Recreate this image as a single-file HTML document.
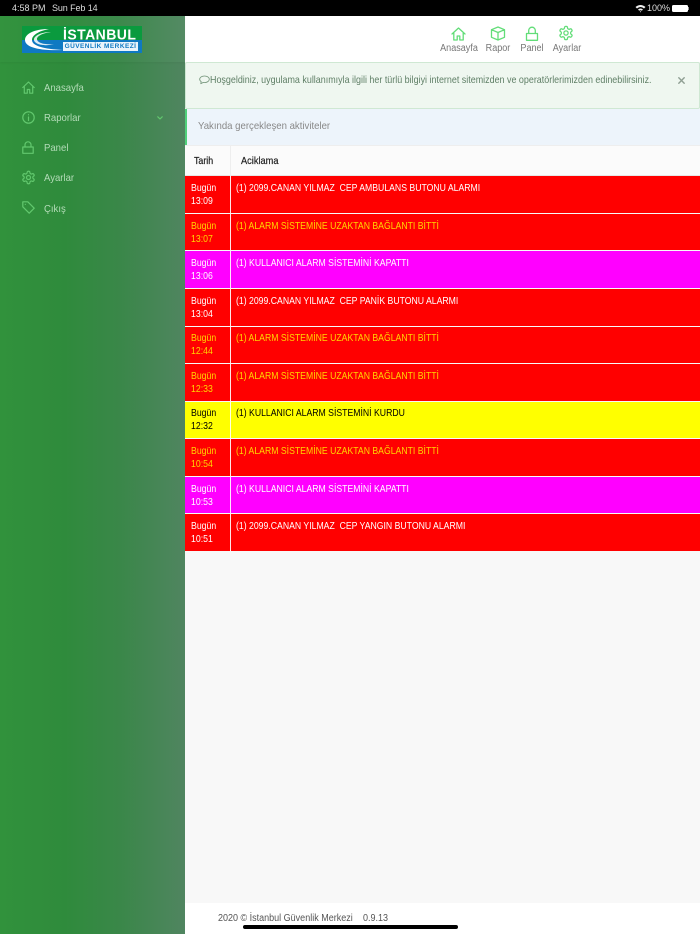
<!DOCTYPE html>
<html lang="tr"><head><meta charset="utf-8"><title>İstanbul Güvenlik Merkezi</title>
<style>
*{box-sizing:border-box}
html,body{margin:0;padding:0}
body{width:700px;height:934px;position:relative;overflow:hidden;background:#f8f8f8;font-family:"Liberation Sans",sans-serif;font-size:10px;color:#333}
.a{position:absolute;white-space:nowrap;transform-origin:left top}
.side{position:absolute;left:0;top:16px;width:185px;height:918px;background:linear-gradient(90deg,#31923c 0%,#2f8b3c 35%,#3a8749 65%,#508560 100%)}
.sidehead{position:absolute;left:0;top:16px;width:185px;height:46px;background:linear-gradient(90deg,#33933e 0%,#318d3e 35%,#3d894c 65%,#548a64 100%);box-shadow:0 1px 2px rgba(0,0,0,.05)}
.mi{position:absolute;left:44px;color:#b4dcb8;font-size:10.5px;line-height:12px;transform:scaleX(.91);transform-origin:left top;white-space:nowrap}
svg{position:absolute;fill:none;stroke-linecap:round;stroke-linejoin:round}
.si{stroke:#62c86e;stroke-width:1.2}
.ti{stroke:#62dd78;stroke-width:1.3}
.tl{position:absolute;top:43px;color:#777;font-size:10px;line-height:12px;text-align:center;width:60px;transform:scaleX(.905);transform-origin:center top}
.row{position:absolute;left:185px;width:515px}
.d{position:absolute;left:6px;top:6px;font-size:10.5px;line-height:13px;white-space:nowrap;transform:scaleX(.83);transform-origin:left top}
.t{position:absolute;left:51px;top:6px;font-size:10.5px;line-height:13px;white-space:pre;transform:scaleX(.827);transform-origin:left top}
.sep{position:absolute;left:45px;top:0;width:1px;height:100%;background:rgba(255,255,255,.9)}
.r{background:#f00;color:#fff}.o{background:#f00;color:#ffd500}.m{background:#f0f;color:#fff}.y{background:#ff0;color:#000}
</style></head><body>

<div class="a" style="left:0;top:0;width:700px;height:16px;background:#000"></div>
<div class="a" style="left:12px;top:3px;color:#ddd;font-size:9px;line-height:11px">4:58 PM</div>
<div class="a" style="left:52px;top:3px;color:#ddd;font-size:9px;line-height:11px;letter-spacing:-.1px">Sun Feb 14</div>
<svg style="left:635px;top:4px" width="11" height="9" viewBox="0 0 11 9"><path d="M.5 3Q5.500-1 10.500 3L9 4.500Q5.500 1.500 2 4.500ZM3 5.500Q5.500 3.500 8 5.500L6.800 6.800Q5.500 5.800 4.200 6.800ZM5.500 8.500 4.800 7.500Q5.500 7 6.200 7.500Z" fill="#eee"/></svg>
<div class="a" style="left:647px;top:3px;color:#ddd;font-size:9px;line-height:11px">100%</div>
<div class="a" style="left:672px;top:5px;width:16px;height:7px;background:#fff;border-radius:1.500px"></div>
<div class="a" style="left:688px;top:7px;width:1px;height:3px;background:#999"></div>

<div class="a" style="left:185px;top:16px;width:515px;height:46px;background:#fff"></div>
<div class="a" style="left:185px;top:62px;width:515px;height:47px;background:#eff7f0;border:1px solid #cfe8d3;border-radius:2px"></div>
<svg style="left:199px;top:75px" width="11" height="10" viewBox="0 0 11 10"><path d="M5.500 1C2.800 1 .7 2.500.7 4.300c0 1 .6 1.800 1.500 2.400L1.800 8.700l2.300-1.200c.4.100.9.100 1.400.1 2.700 0 4.800-1.500 4.800-3.300S8.200 1 5.500 1z" stroke="#6d8f74" stroke-width=".8"/></svg>
<div class="a" style="left:210px;top:73.500px;color:#5f7f66;font-size:10.500px;line-height:12px;transform:scaleX(.851)">Hoşgeldiniz, uygulama kullanımıyla ilgili her türlü bilgiyi internet sitemizden ve operatörlerimizden edinebilirsiniz.</div>
<svg style="left:678px;top:77px" width="7" height="7" viewBox="0 0 7 7"><path d="M.8.800l5.400 5.400M6.200.800.800 6.200" stroke="#8f9f93" stroke-width="1.400"/></svg>

<div class="a" style="left:185px;top:109px;width:515px;height:36px;background:#edf4fb;border-left:2px solid #4fd07a"></div>
<div class="a" style="left:198px;top:120px;color:#888;font-size:10.500px;line-height:13px;transform:scaleX(.914)">Yakında gerçekleşen aktiviteler</div>

<div class="a" style="left:185px;top:145px;width:515px;height:31px;background:#fbfbfb;border-top:1px solid #eee;border-bottom:1px solid #e6e6e6"></div>
<div class="a" style="left:230px;top:145px;width:1px;height:31px;background:#eee"></div>
<div class="a" style="left:194px;top:155px;color:#222;font-size:10.500px;line-height:12px;transform:scaleX(.84);-webkit-text-stroke:.2px #222">Tarih</div>
<div class="a" style="left:241px;top:155px;color:#222;font-size:10.500px;line-height:12px;transform:scaleX(.88);-webkit-text-stroke:.2px #222">Aciklama</div>

<div class="row r" style="top:176px;height:37px"><div class="d">Bugün<br>13:09</div><div class="sep"></div><div class="t">(1) 2099.CANAN YILMAZ  CEP AMBULANS BUTONU ALARMI</div></div>
<div class="row o" style="top:214px;height:36px"><div class="d">Bugün<br>13:07</div><div class="sep"></div><div class="t">(1) ALARM SİSTEMİNE UZAKTAN BAĞLANTI BİTTİ</div></div>
<div class="row m" style="top:251px;height:37px"><div class="d">Bugün<br>13:06</div><div class="sep"></div><div class="t">(1) KULLANICI ALARM SİSTEMİNİ KAPATTI</div></div>
<div class="row r" style="top:289px;height:37px"><div class="d">Bugün<br>13:04</div><div class="sep"></div><div class="t">(1) 2099.CANAN YILMAZ  CEP PANİK BUTONU ALARMI</div></div>
<div class="row o" style="top:327px;height:36px"><div class="d" style="top:5px">Bugün<br>12:44</div><div class="sep"></div><div class="t" style="top:5px">(1) ALARM SİSTEMİNE UZAKTAN BAĞLANTI BİTTİ</div></div>
<div class="row o" style="top:364px;height:37px"><div class="d">Bugün<br>12:33</div><div class="sep"></div><div class="t">(1) ALARM SİSTEMİNE UZAKTAN BAĞLANTI BİTTİ</div></div>
<div class="row y" style="top:402px;height:36px"><div class="d" style="top:5px">Bugün<br>12:32</div><div class="sep"></div><div class="t" style="top:5px">(1) KULLANICI ALARM SİSTEMİNİ KURDU</div></div>
<div class="row o" style="top:439px;height:37px"><div class="d">Bugün<br>10:54</div><div class="sep"></div><div class="t">(1) ALARM SİSTEMİNE UZAKTAN BAĞLANTI BİTTİ</div></div>
<div class="row m" style="top:477px;height:36px"><div class="d">Bugün<br>10:53</div><div class="sep"></div><div class="t">(1) KULLANICI ALARM SİSTEMİNİ KAPATTI</div></div>
<div class="row r" style="top:514px;height:37px"><div class="d">Bugün<br>10:51</div><div class="sep"></div><div class="t">(1) 2099.CANAN YILMAZ  CEP YANGIN BUTONU ALARMI</div></div>

<svg style="left:451px;top:27px" width="15" height="14" viewBox="0 0 15 14"><path class="ti" d="M1 7 7.500 1 14 7M2.800 6v7h3.400V9h2.600v4h3.400V6"/></svg>
<svg style="left:490px;top:26px" width="16" height="15" viewBox="0 0 16 15"><path class="ti" d="M8 1l6.500 2.700v7.600L8 14l-6.500-2.700V3.700zM1.500 3.700 8 6.500l6.500-2.800M8 6.500V14"/></svg>
<svg style="left:525px;top:26px" width="14" height="15" viewBox="0 0 14 15"><path class="ti" d="M1.500 7.500h11v6.800h-11zM3.700 7.500V4.500a3.300 3.300 0 0 1 6.600 0v3"/></svg>
<svg style="left:558px;top:25px" width="16" height="16" viewBox="0 0 24 24"><g class="ti" style="stroke-width:1.900"><circle cx="12" cy="12" r="3.200"/><path d="M12.220 2h-.44a2 2 0 0 0-2 2v.18a2 2 0 0 1-1 1.730l-.43.250a2 2 0 0 1-2 0l-.15-.08a2 2 0 0 0-2.730.730l-.22.380a2 2 0 0 0 .73 2.730l.15.100a2 2 0 0 1 1 1.720v.510a2 2 0 0 1-1 1.740l-.15.090a2 2 0 0 0-.73 2.730l.22.380a2 2 0 0 0 2.730.730l.15-.08a2 2 0 0 1 2 0l.43.250a2 2 0 0 1 1 1.730V20a2 2 0 0 0 2 2h.44a2 2 0 0 0 2-2v-.18a2 2 0 0 1 1-1.730l.43-.250a2 2 0 0 1 2 0l.15.08a2 2 0 0 0 2.730-.73l.22-.390a2 2 0 0 0-.73-2.730l-.15-.08a2 2 0 0 1-1-1.740v-.5a2 2 0 0 1 1-1.740l.15-.090a2 2 0 0 0 .73-2.730l-.22-.380a2 2 0 0 0-2.730-.73l-.15.08a2 2 0 0 1-2 0l-.43-.25a2 2 0 0 1-1-1.730V4a2 2 0 0 0-2-2z"/></g></svg>
<div class="tl" style="left:429px">Anasayfa</div>
<div class="tl" style="left:468px">Rapor</div>
<div class="tl" style="left:502px">Panel</div>
<div class="tl" style="left:537px">Ayarlar</div>

<div class="a" style="left:185px;top:903px;width:515px;height:31px;background:#fff"></div>
<div class="a" style="left:218px;top:912.500px;color:#555;font-size:10px;line-height:12px;transform:scaleX(.9)">2020 © İstanbul Güvenlik Merkezi</div>
<div class="a" style="left:363px;top:912.500px;color:#555;font-size:10px;line-height:12px;transform:scaleX(.9)">0.9.13</div>
<div class="a" style="left:243px;top:925px;width:215px;height:4px;background:#000;border-radius:2px"></div>

<div class="side"></div>
<div class="sidehead"></div>

<div class="a" style="left:22px;top:26px;width:120px;height:27px;background:#0a9a3e"></div>
<div class="a" style="left:22px;top:40px;width:120px;height:13px;background:#0f79c2"></div>
<svg style="left:22px;top:26px" width="44" height="27" viewBox="0 0 44 27"><path d="M27 3C12 3 3 8 3 14c0 7 13 11 38 10C22 23 10 20 10 14 10 9 17 5 27 3z" fill="#fff"/><path d="M29 6C21 7 15 10 15 13c0 4 8 6 17 5-10 3-21 0-20-5C13 9 20 6 29 6z" fill="#fff" opacity=".85"/></svg>
<div class="a" style="left:63px;top:26.500px;color:#fff;font-weight:bold;font-size:14px;line-height:14px;letter-spacing:.45px;transform:scaleY(1.05)">İSTANBUL</div>
<div class="a" style="left:63px;top:41.500px;width:75px;height:9px;background:#eaf4fb;color:#0f79c2;font-weight:bold;font-size:6.500px;line-height:9px;text-align:center;letter-spacing:.45px">GÜVENLİK MERKEZİ</div>

<svg style="left:22px;top:81px" width="13" height="13" viewBox="0 0 13 13"><path class="si" d="M.8 6.500 6.500 1l5.700 5.500M2.300 5.500v6.700h3V8.500h2.400v3.700h3V5.500"/></svg>
<svg style="left:22px;top:111px" width="13" height="13" viewBox="0 0 13 13"><circle class="si" cx="6.500" cy="6.500" r="5.700"/><path class="si" d="M6.500 6v3.500M6.500 3.700v.1"/></svg>
<svg style="left:22px;top:141px" width="12" height="13" viewBox="0 0 12 13"><path class="si" d="M.8 6h10.400v6.300H.8zM3 6V3.800a3 3 0 0 1 6 0V6"/></svg>
<svg style="left:21px;top:170px" width="15" height="15" viewBox="0 0 24 24"><g class="si" style="stroke-width:1.900"><circle cx="12" cy="12" r="3.200"/><path d="M12.220 2h-.44a2 2 0 0 0-2 2v.18a2 2 0 0 1-1 1.730l-.43.250a2 2 0 0 1-2 0l-.15-.08a2 2 0 0 0-2.730.730l-.22.380a2 2 0 0 0 .73 2.730l.15.100a2 2 0 0 1 1 1.720v.510a2 2 0 0 1-1 1.740l-.15.090a2 2 0 0 0-.73 2.730l.22.380a2 2 0 0 0 2.730.730l.15-.08a2 2 0 0 1 2 0l.43.250a2 2 0 0 1 1 1.730V20a2 2 0 0 0 2 2h.44a2 2 0 0 0 2-2v-.18a2 2 0 0 1 1-1.730l.43-.250a2 2 0 0 1 2 0l.15.08a2 2 0 0 0 2.730-.73l.22-.390a2 2 0 0 0-.73-2.730l-.15-.08a2 2 0 0 1-1-1.740v-.5a2 2 0 0 1 1-1.740l.15-.090a2 2 0 0 0 .73-2.730l-.22-.380a2 2 0 0 0-2.730-.73l-.15.08a2 2 0 0 1-2 0l-.43-.25a2 2 0 0 1-1-1.730V4a2 2 0 0 0-2-2z"/></g></svg>
<svg style="left:22px;top:201px" width="13" height="13" viewBox="0 0 13 13"><path class="si" d="M.8.800h5l6.400 6.400-5 5L.8 5.800zM3.300 3.300v.1"/></svg>
<svg style="left:157px;top:116px" width="6" height="4" viewBox="0 0 6 4"><path class="si" d="M.8.800 3 3 5.200.8"/></svg>

<div class="mi" style="top:82px">Anasayfa</div>
<div class="mi" style="top:112px">Raporlar</div>
<div class="mi" style="top:142px">Panel</div>
<div class="mi" style="top:172px">Ayarlar</div>
<div class="mi" style="top:202.500px">Çıkış</div>

</body></html>
